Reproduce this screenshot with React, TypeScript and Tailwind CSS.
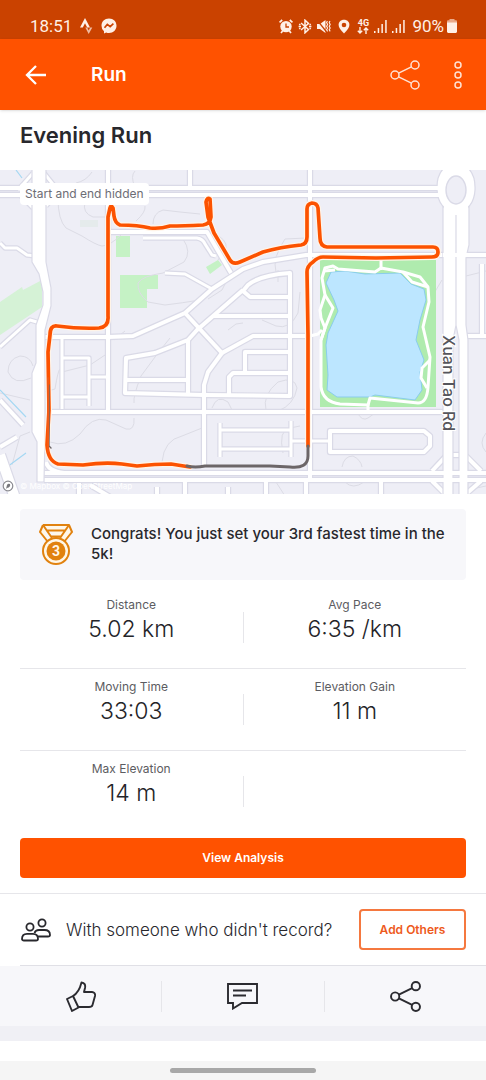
import React from 'react';
import clsx from 'clsx';

type Road = { d: string; w: number };

const roads: Road[] = [
  // left side
  { d: 'M0 243L5 248L17 248L27 255L36 256', w: 3 },
  { d: 'M0 347L30 320L40 323', w: 3 },
  { d: 'M0 400L23 425', w: 4 },
  { d: 'M0 447L17 437', w: 4 },
  { d: 'M0 455L15 498', w: 10 },
  { d: 'M18 190L33 173M44 173L56 188M20 195L33 208M56 195L46 206', w: 3 },
  // upper blocks
  { d: 'M108 168V412M190 168V188M310 168V480', w: 4 },
  { d: 'M108 232H207L231 273', w: 4 },
  { d: 'M143 238H197Q203 239 205 244L212 255L216 256', w: 3 },
  { d: 'M44 337H108L133 336L160 324L185 313L212 289L243 269L263 262L306 255H490', w: 4 },
  { d: 'M165 273L185 274L212 289', w: 3 },
  { d: 'M185 313L222 353L253 336H310', w: 4 },
  { d: 'M222 353L208 372L204 385V467', w: 4 },
  { d: 'M243 290L197 330L188 340L155 353L126 358L125 393L204 395L290 396V273Q260 275 248 285L243 291L250 297H290', w: 4 },
  { d: 'M213 316H290M188 340V394M126 380H188', w: 4 },
  { d: 'M289 352H245V372M289 373H233L229 377V394', w: 4 },
  { d: 'M62 337V409M62 358H89V406M62 397H89M89 377H108', w: 3 },
  { d: 'M50 412H443', w: 4 },
  { d: 'M220 423V457M220 430H290M220 449H290M291 421V457M291 441H330', w: 3 },
  { d: 'M330 431H424L430 436V446L424 452H330Z', w: 4 },
  // bottom
  { d: 'M46 462Q48 471 64 473M44 473H490M44 480H490', w: 4 },
  { d: 'M157 487V496M185 481V496M228 487V496M79 483V496M90 485L112 498M306 480V496M266 480V496M381 480V496', w: 4 },
  { d: 'M432 471L447 455H465L481 471M432 481L447 496M481 481L466 494', w: 4 },
  { d: 'M466 336H490M482 264V336', w: 4 },
  // top pair
  { d: 'M0 188H440M0 195H440', w: 4 },
];

const contours = [
  'M58 198Q58 220 66 228L82 236Q96 245 102 246Q110 246 122 234',
  'M92 172Q86 181 76 183M85 202Q82 213 93 217L106 217',
  'M135 171Q130 176 135 187M145 206Q146 212 136 221',
  'M153 224Q153 213 163 210L180 212L200 214M212 232Q228 240 226 248L218 260',
  'M183 239Q192 252 184 262L163 273Q142 276 138 283Q137 293 148 302L165 305Q182 303 200 300',
  'M8 372Q8 359 20 356Q30 356 33 366M8 372Q14 386 31 378M0 393L30 400',
  'M62 372L90 365L108 353M114 340L125 331M50 442Q66 448 80 434Q92 416 106 420L126 429Q135 431 134 418',
  'M134 403Q133 396 141 376L158 353L170 338M162 462Q164 440 182 436L202 428M212 408Q217 394 228 402L233 412',
  'M278 270V282M276 272Q272 258 285 239L306 238M300 292L298 313Q290 330 276 326L262 320',
  'M266 410Q262 395 278 382Q295 376 297 388Q294 405 278 411M283 453Q278 430 290 428L300 426',
  'M342 467Q344 456 353 456Q361 460 362 467M345 482Q353 490 364 482M357 412Q362 422 368 418L378 411',
  'M430 300L442 280M466 276L486 271M486 433Q478 443 486 452M467 490L486 486M44 392L55 389Q58 370 60 369',
  'M226 282L222 290L208 299M228 330L236 324L243 323M12 465L20 436L30 432M276 482L285 496',
];

const routeTop =
  'M308 446V335L307 272Q307 266 313 262Q318 257 323 257L376 258L432 257Q438 257 438 252Q438 247 433 247L376 247L327 247Q320 246 320 238L318 208Q317 203 312 203Q307 204 307 209V237Q307 244 301 245Q280 247 263 252L240 262Q233 265 230 260L214 233L208 217L206 202Q207 197 210 199L211 217Q210 224 203 225Q183 226 170 226Q160 229 150 228Q138 225 120 225Q115 223 114 216L113 208Q111 204 110 208L108 217V316Q109 327 99 328Q80 329 57 326Q50 325 50 335L48 352L49 410L47 445Q48 461 58 464L83 465Q105 462 122 464L137 466Q155 464 171 464L190 467';
const routeGrey = 'M187 466Q195 468 205 466L243 466L270 466L290 467Q308 469 308 456V446';

function RouteMap() {
  return (
    <svg viewBox="0 170 486 324" className="block w-full" role="img" aria-label="Run route map">
      <rect x="0" y="170" width="486" height="324" fill="#eeeef6" />
      <path d="M0 302L22 287L23 290L42 280V307L0 335Z" fill="#d5f2d6" />
      <path d="M116 236h14v21h-14zM120 275h38v14h-11v19h-27zM206 267L218 260L222 265L210 274Z" fill="#c5f2c5" />
      <rect x="80" y="220" width="18" height="7" fill="#e5ebec" />
      {contours.map((d) => (
        <path key={d} d={d} fill="none" stroke="#dcdce5" strokeWidth="1" />
      ))}
      <path d="M16 170L22 178M0 390L26 417M7 467L26 453" stroke="#a5d8f3" strokeWidth="1.2" fill="none" />

      <g fill="none" stroke="#dadae7" strokeLinejoin="round">
        {roads.map((r) => (
          <path key={r.d} d={r.d} strokeWidth={r.w + 2.4} />
        ))}
      </g>
      <rect x="320" y="260" width="116" height="147" fill="#afebae" />
      <path
        d="M331 272L345 271L365 274L400 273L411 284L424 289L426 300L420 320L416 340L420 350L424 360L420 372L422 390L415 400L375 395L370 397H337L327 390L328 375L326 345L328 333L338 311L334 300L326 283Z"
        fill="#bce6ff"
        stroke="#8acdec"
        strokeWidth="1"
      />
      <g fill="none" stroke="#fff" strokeLinejoin="round">
        {roads.map((r) => (
          <path key={r.d} d={r.d} strokeWidth={r.w} />
        ))}
        <g strokeWidth="3">
          <path d="M322 278L325 268L333 266L338 269L375 272L381 268L403 272L420 277L428 287L429 302L423 327L430 357L428 387Q427 403 418 403L370 398L368 405L340 404Q323 402 321 387V340L325 328L321 318L320 310L325 295Z" />
          <path d="M325 295L333 308L325 328L321 340M403 272L412 282L428 287M430 360L422 368L421 378L427 388M381 270V258M368 404V412M310 336L318 334L322 330M324 271L335 270" />
        </g>
      </g>

      {/* highways */}
      <path
        d="M32 168H46V262L51 288V306L45 330V364L45 436L44 482H37V442L32 432V373L36 363V325L43 305V292L39 274L32 262Z"
        fill="#fff"
        stroke="#dadae7"
        strokeWidth="1.2"
      />
      <path d="M443 168H469V245L466 258V325L468 340V496H459V340L456 325V215V325L453 340V496H443V210Z" fill="#fff" stroke="#dadae7" strokeWidth="1.2" />
      <path d="M456 163Q476 166 475 190Q474 209 456 214Q438 209 437 190Q436 166 456 163Z" fill="#fff" stroke="#dadae7" strokeWidth="1.2" />
      <path d="M444 204H468V215H444ZM444 169H468V176H444ZM432 186H440V190H432ZM432 193H440V197H432Z" fill="#fff" />
      <ellipse cx="456" cy="190" rx="10" ry="14" fill="#eeeef6" stroke="#dadae7" strokeWidth="1.4" />
      <path d="M45 473H62M45 480H62M443 255H470M435 473H486M435 480H486" stroke="#fff" strokeWidth="4" />

      <g fill="none" strokeLinejoin="round" strokeLinecap="round">
        <path d={routeTop} stroke="#fff4e8" strokeWidth="6" />
        <path d={routeTop} stroke="#fc5200" strokeWidth="3.7" />
        <path d={routeGrey} stroke="#6c6668" strokeWidth="3" />
        <path d="M49 385L49 446L51 448" stroke="#6c6668" strokeWidth="1.4" />
        <path d="M48 378V452" stroke="#f25a15" strokeWidth="2" />
      </g>

      <g fontFamily="Inter, sans-serif">
        <text
          transform="translate(443 335) rotate(90)"
          fontSize="16"
          fontWeight="500"
          fill="#56565c"
          stroke="#fff"
          strokeWidth="2"
          paintOrder="stroke"
        >
          Xuan Tao Rd
        </text>
        <text x="20" y="489" fontSize="8" fontWeight="500" fill="#fff" fillOpacity="0.9">
          © Mapbox © OpenStreetMap
        </text>
      </g>
      <circle cx="8" cy="486" r="4.8" fill="#fff" stroke="#8a8a90" strokeWidth="1.2" />
      <path d="M6 489L7 485Q8 483 10 484Q11 487 7 488Z" fill="#77777c" />
    </svg>
  );
}

function ShareIcon({ size, stroke }: { size: number; stroke: number }) {
  return (
    <svg width={size} height={size} viewBox="0 0 30 30" fill="none" stroke="currentColor" strokeWidth={stroke} aria-hidden="true">
      <circle cx="5" cy="15" r="4" />
      <circle cx="25" cy="5" r="4" />
      <circle cx="25" cy="25" r="4" />
      <path d="M8.6 13.2L21.4 6.8M8.6 16.8L21.4 23.2" />
    </svg>
  );
}

function SignalIcon() {
  return (
    <svg width="13" height="14" viewBox="0 0 13 14" fill="currentColor" aria-hidden="true">
      <path d="M0 12h1.5v2H0zM3.7 9h1.5v5H3.7zM7.4 5h1.5v9H7.4zM11.2 1h1.5v13h-1.5z" />
    </svg>
  );
}

function StatusBar() {
  return (
    <div className="flex h-[39px] items-end justify-between bg-[#ca4200] pr-[29px] pb-[3px] pl-[30px] font-[Roboto,sans-serif] text-[17px] leading-5 text-[#fff0e6]">
      <div className="flex items-center gap-2">
        <span>18:51</span>
        <svg width="13" height="16" viewBox="0 0 13 16" fill="currentColor" aria-hidden="true">
          <path d="M5 0L10 9.6H7.2L5 5.3L2.8 9.6H0Z" />
          <path d="M5.3 9.6H7.2L8.7 12.4L10.2 9.6H12.3L8.7 16Z" opacity="0.7" />
        </svg>
        <svg width="16" height="16" viewBox="0 0 16 16" aria-hidden="true">
          <path d="M8 0.5C3.6 0.5 0.5 3.6 0.5 7.7Q0.5 11.3 3 13.2V15.5L5.2 14.4Q6.5 14.9 8 14.9C12.4 14.9 15.5 11.8 15.5 7.7S12.4 0.5 8 0.5Z" fill="currentColor" />
          <path d="M3.5 9.8L6.3 6.4L9.2 8.7L12.4 5.7" stroke="#ca4200" strokeWidth="1.6" fill="none" />
        </svg>
      </div>
      <div className="flex items-center gap-[5px]">
        <svg width="14" height="15" viewBox="0 0 14 15" aria-hidden="true">
          <circle cx="7" cy="7.6" r="5.7" fill="currentColor" />
          <path d="M0.5 3.4L3.2 1M13.5 3.4L10.8 1M2 14L3.6 12M12 14L10.4 12" stroke="currentColor" strokeWidth="1.7" />
          <path d="M7 4.4V8H10" stroke="#ca4200" strokeWidth="1.3" fill="none" />
        </svg>
        <svg width="14" height="15" viewBox="0 0 14 15" fill="none" stroke="currentColor" strokeWidth="1.5" aria-hidden="true">
          <path d="M3 4L10.5 10.5L7 13.8V1.2L10.5 4.5L3 11" />
          <path d="M0.6 7.5H3M11 7.5H13.4M1.2 5.2l1.2.8M1.2 9.8l1.2-.8M12.8 5.2l-1.2.8M12.8 9.8l-1.2-.8" />
        </svg>
        <svg width="14" height="15" viewBox="0 0 14 15" aria-hidden="true">
          <path d="M0 5H3L8.5 1V14L3 10H0Z" fill="currentColor" />
          <path d="M0 1L10 13.5" stroke="#ca4200" strokeWidth="1.3" />
          <path d="M10.4 2l-.8 1.6 1 1.8-1 1.8 1 1.8-1 1.8 1 1.6M13 2l-.8 1.6 1 1.8-1 1.8 1 1.8-1 1.8 1 1.6" fill="none" stroke="currentColor" strokeWidth="1.1" />
        </svg>
        <svg width="14" height="15" viewBox="0 0 14 15" aria-hidden="true">
          <path d="M8 0.8C4.8 0.8 2.6 3 2.6 6Q2.6 9 8 14.5Q13.4 9 13.4 6C13.4 3 11.2 0.8 8 0.8Z" fill="currentColor" />
          <circle cx="8" cy="6" r="2.3" fill="#ca4200" />
        </svg>
        <span className="ml-0.5 flex flex-col items-center text-[9px] leading-[8px] font-bold">
          4G
          <svg width="12" height="7" viewBox="0 0 12 7" fill="none" stroke="currentColor" strokeWidth="1.4" aria-hidden="true">
            <path d="M3 0V6M0.8 3.8L3 6L5.2 3.8M9 7V1M6.8 3.2L9 1L11.2 3.2" />
          </svg>
        </span>
        <SignalIcon />
        <SignalIcon />
        <span className="-mr-0.5 ml-0.5">90%</span>
        <svg width="10" height="14" viewBox="0 0 10 14" fill="currentColor" aria-hidden="true">
          <path d="M2.5 0H7.5V1.2H9Q10 1.2 10 2.4V3.2H0V2.4Q0 1.2 1 1.2H2.5Z" opacity="0.6" />
          <path d="M0 3.2H10V12.6Q10 14 8.8 14H1.2Q0 14 0 12.6Z" />
        </svg>
      </div>
    </div>
  );
}

function Medal() {
  return (
    <svg width="34" height="41" viewBox="0 0 34 41" className="shrink-0" aria-hidden="true">
      <g fill="none" stroke="#e1820f" strokeWidth="2" strokeLinejoin="round">
        <path d="M4 1H30L33 8L25 18M4 1L1 8L9 18" fill="#fff7e8" />
        <path d="M4 1L13 14M30 1L21 14M8 6.5H26M11.5 12.5H22.5" />
        <circle cx="17" cy="27" r="13" fill="#fff7e8" />
      </g>
      <circle cx="17" cy="27" r="9.5" fill="#e1820f" />
      <text x="17" y="32" textAnchor="middle" fontFamily="Roboto, sans-serif" fontWeight="700" fontSize="14" fill="#fff7e8">
        3
      </text>
    </svg>
  );
}

const stats = [
  [
    { label: 'Distance', value: '5.02 km' },
    { label: 'Avg Pace', value: '6:35 /km' },
  ],
  [
    { label: 'Moving Time', value: '33:03' },
    { label: 'Elevation Gain', value: '11 m' },
  ],
  [{ label: 'Max Elevation', value: '14 m' }],
];

function Stat({ label, value }: { label: string; value: string }) {
  return (
    <div className="text-center">
      <dt className="text-xs leading-5 text-[#5c5c61]">{label}</dt>
      <dd className="text-[23px] leading-7 font-light text-[#242428]">{value}</dd>
    </div>
  );
}

const App: React.FC = () => {
  return (
    <div className="flex min-h-screen flex-col bg-white font-[Inter,sans-serif] text-[#28282d]">
      <StatusBar />
      <header className="z-10 flex h-[71px] items-center bg-[#ff5200] pr-6 pl-[25px] text-white shadow-sm">
        <button type="button" aria-label="Back">
          <svg width="22" height="20" viewBox="0 0 22 20" fill="none" stroke="currentColor" strokeWidth="2.3" aria-hidden="true">
            <path d="M11 1L2 10L11 19M2 10H21" />
          </svg>
        </button>
        <h1 className="ml-11 flex-1 text-[19px] leading-6 font-semibold">Run</h1>
        <button type="button" aria-label="Share" className="mr-[34px] text-[#ffe2d3]">
          <ShareIcon size={30} stroke={1.5} />
        </button>
        <button type="button" aria-label="More options" className="text-[#ffe2d3]">
          <svg width="8" height="28" viewBox="0 0 8 28" fill="none" stroke="currentColor" strokeWidth="1.5" aria-hidden="true">
            <circle cx="4" cy="4" r="3" />
            <circle cx="4" cy="14" r="3" />
            <circle cx="4" cy="24" r="3" />
          </svg>
        </button>
      </header>

      <h2 className="px-5 pt-[9px] pb-[19px] text-[22px] leading-8 font-semibold">Evening Run</h2>

      <div className="relative">
        <RouteMap />
        <span className="absolute top-[13px] left-5 rounded-[4px] bg-white px-[5px] py-px text-xs leading-5 text-[#6d6d75]">
          Start and end hidden
        </span>
      </div>

      <div className="mx-5 mt-[15px] flex gap-[18px] rounded-[4px] bg-[#f7f7fa] py-[15px] pr-2 pl-[19px]">
        <Medal />
        <p className="text-[15px] leading-5 font-medium">Congrats! You just set your 3rd fastest time in the 5k!</p>
      </div>

      <dl className="mx-5 mt-[7px]">
        {stats.map((row, i) => (
          <div key={i} className={clsx('flex h-[82px] pt-2', i < stats.length - 1 && 'border-b border-[#e6e6ea]')}>
            <div className="flex-1">
              <Stat {...row[0]} />
            </div>
            <div className="mt-[17px] h-[31px] w-px bg-[#e6e6ea]" />
            <div className="flex-1">{row[1] && <Stat {...row[1]} />}</div>
          </div>
        ))}
      </dl>

      <button type="button" className="mx-5 mt-[5px] h-10 rounded-[4px] bg-[#ff5200] text-xs font-semibold text-white">
        View Analysis
      </button>

      <div className="mt-[15px] border-t border-[#e6e6ea] pl-5">
        <div className="flex h-[72px] items-center border-b border-[#e0e0e6] pr-5">
          <svg width="31" height="24" viewBox="0 0 31 24" className="shrink-0" fill="none" stroke="currentColor" strokeWidth="1.8" aria-hidden="true">
            <circle cx="10" cy="9" r="3.6" />
            <circle cx="22" cy="5" r="3.6" />
            <path d="M2 21Q2 15.8 7 15.8H13Q18 15.8 18 21Q18 22.5 16 22.5H4Q2 22.5 2 21Z" />
            <path d="M14.5 15Q15.5 12 19 12H24.5Q30 12 30 17Q30 18.5 28 18.5H17.5" />
          </svg>
          <p className="ml-[15px] flex-1 text-[17px] leading-6 font-light">With someone who didn't record?</p>
          <button type="button" className="h-[41px] w-[107px] shrink-0 rounded-[4px] border-2 border-[#f5783f] text-xs font-semibold text-[#ee5a1c]">
            Add Others
          </button>
        </div>
      </div>

      <div className="flex h-[60px] items-center bg-[#f7f7fa] text-[#2b2b30]">
        <button type="button" aria-label="Give kudos" className="flex flex-1 justify-center">
          <svg width="30" height="31" viewBox="0 0 30 31" fill="none" stroke="currentColor" strokeWidth="1.9" strokeLinejoin="round" aria-hidden="true">
            <path d="M1 18L7 15L12.5 26.5L6 30Z" />
            <path d="M7 15Q13 11.5 15.5 1.5Q20 2 19 7L18 11H26Q29.5 11.5 29 15L26.5 24Q26 26 23 26H12.5" />
          </svg>
        </button>
        <div className="h-[31px] w-px bg-[#e6e6ea]" />
        <button type="button" aria-label="Comment" className="flex flex-1 justify-center">
          <svg width="31" height="27" viewBox="0 0 31 27" fill="none" stroke="currentColor" strokeWidth="1.9" aria-hidden="true">
            <path d="M1 1H30V20H15L6 25.5V20H1Z" />
            <path d="M6 7.5H25M6 12.5H19" />
          </svg>
        </button>
        <div className="h-[31px] w-px bg-[#e6e6ea]" />
        <button type="button" aria-label="Share activity" className="flex flex-1 justify-center">
          <ShareIcon size={31} stroke={1.9} />
        </button>
      </div>
      <div className="h-[15px] bg-[#f0f0f5]" />

      <div className="mt-auto flex h-[19px] items-center justify-center bg-[#f5f5f5]">
        <div className="h-[5px] w-[146px] rounded-full bg-[#a8a8a8]" />
      </div>
    </div>
  );
};

export default App;
